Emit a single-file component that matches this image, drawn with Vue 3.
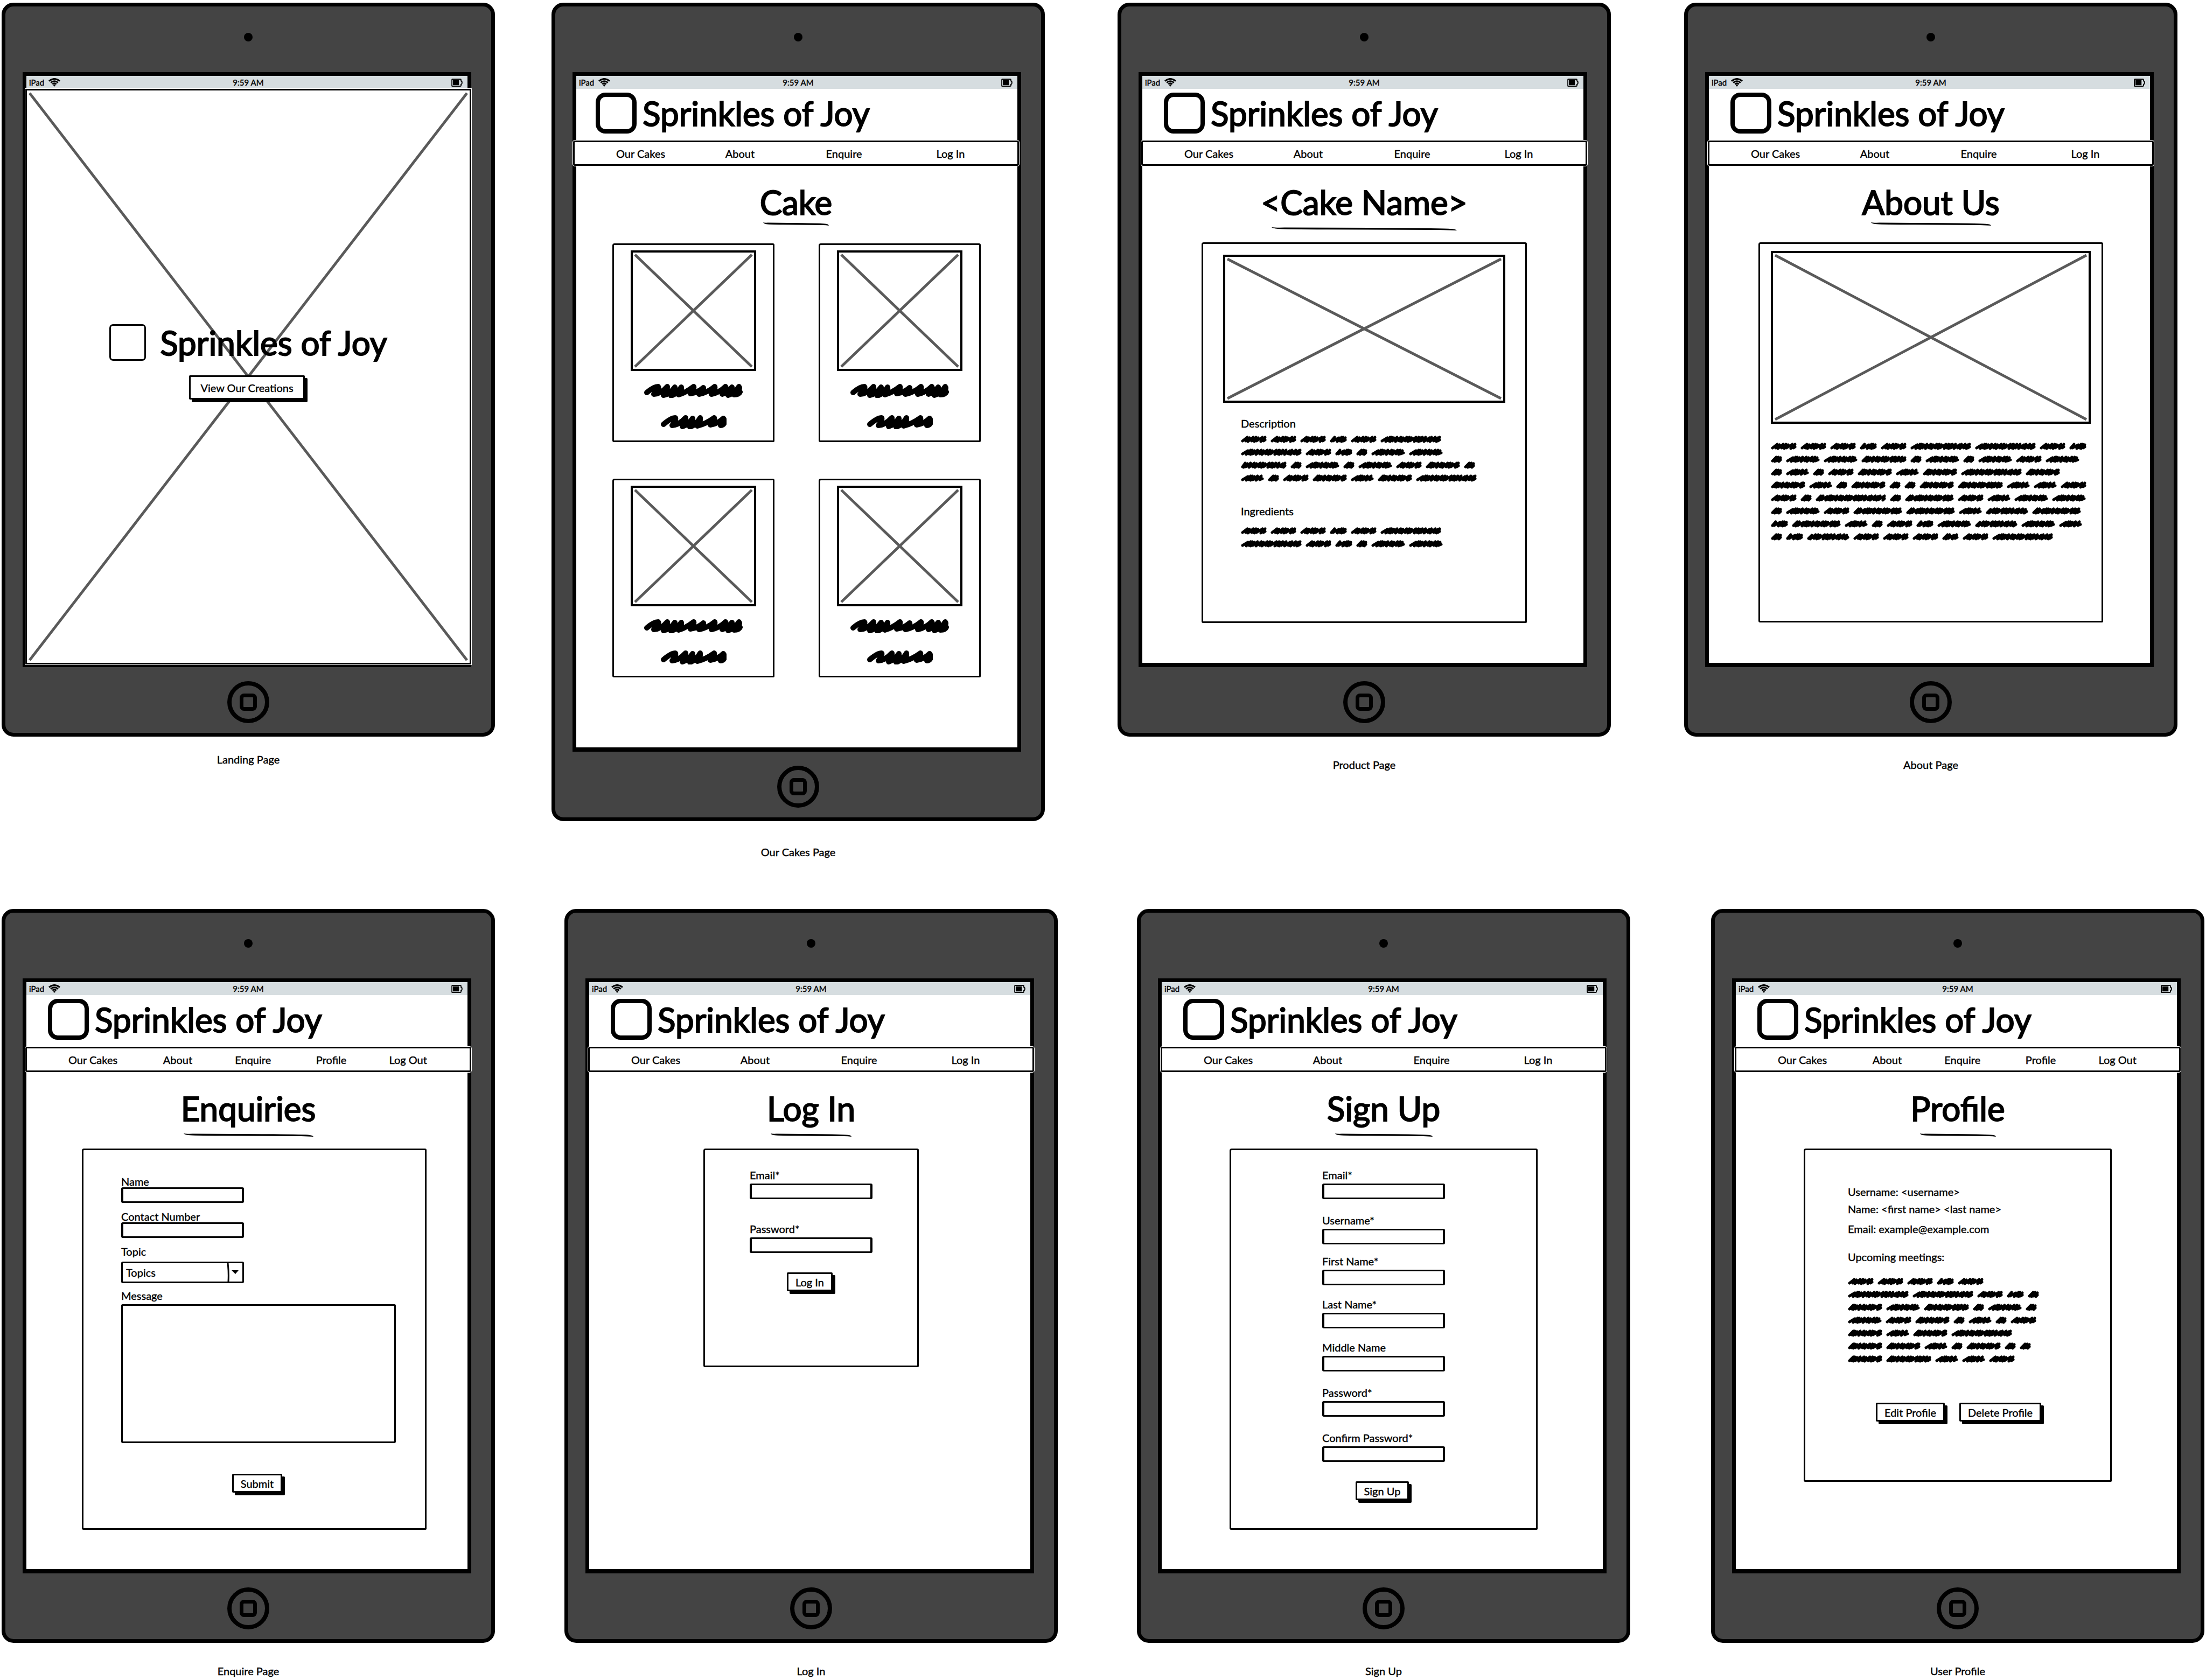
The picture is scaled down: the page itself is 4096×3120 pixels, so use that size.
<script setup>
const guestNav = ['Our Cakes', 'About', 'Enquire', 'Log In']
const memberNav = ['Our Cakes', 'About', 'Enquire', 'Profile', 'Log Out']

const rows = [
  {
    id: 'top',
    screens: [
      { id: 'landing', caption: 'Landing Page' },
      { id: 'cakes', caption: 'Our Cakes Page', title: 'Cake', nav: guestNav, rule: 122 },
      { id: 'product', caption: 'Product Page', title: '<Cake Name>', nav: guestNav, rule: 344 },
      { id: 'about', caption: 'About Page', title: 'About Us', nav: guestNav, rule: 223 },
    ],
  },
  {
    id: 'bottom',
    screens: [
      { id: 'enquire', caption: 'Enquire Page', title: 'Enquiries', nav: memberNav, rule: 241 },
      { id: 'login', caption: 'Log In', title: 'Log In', nav: guestNav, rule: 150 },
      { id: 'signup', caption: 'Sign Up', title: 'Sign Up', nav: guestNav, rule: 181 },
      { id: 'profile', caption: 'User Profile', title: 'Profile', nav: memberNav, rule: 141 },
    ],
  },
]

const loginFields = [
  { id: 'login-email', label: 'Email*', type: 'email' },
  { id: 'login-password', label: 'Password*', type: 'password' },
]

const signupFields = [
  { id: 'signup-email', label: 'Email*', type: 'email', space: 'wide' },
  { id: 'signup-username', label: 'Username*', type: 'text', space: 'tight' },
  { id: 'signup-first', label: 'First Name*', type: 'text', space: 'medium' },
  { id: 'signup-last', label: 'Last Name*', type: 'text', space: 'medium' },
  { id: 'signup-middle', label: 'Middle Name', type: 'text', space: 'wide' },
  { id: 'signup-password', label: 'Password*', type: 'password', space: 'wide' },
  { id: 'signup-confirm', label: 'Confirm Password*', type: 'password', space: 'last' },
]

// Placeholder copy: every number is the width of one scribbled word.
const LINE = 24
const GAP = 7
const STEPS = [7, 5, 4, 8, 5, 3, 4, 6, 7, 4]

function wordPath(left, width, middle) {
  const end = left + width - 3
  let x = left + 3
  let i = width % STEPS.length
  let d = `M${x} ${middle + 3}`
  while (x < end - 4) {
    const step = STEPS[i % STEPS.length]
    const peak = Math.min(x + step + 2, end)
    const lift = i % 3 === 0 ? 3 : 4
    d += `L${peak} ${middle - lift}L${peak - 3} ${middle + (i % 2 ? 4 : 3)}`
    x = peak - 2
    i += 1
  }
  return `${d}L${end} ${middle + 1}`
}

function scribble(lines) {
  let d = ''
  let width = 0
  lines.forEach((words, row) => {
    let x = 0
    words.forEach((w) => {
      d += wordPath(x, w, row * LINE + LINE / 2)
      x += w + GAP
    })
    width = Math.max(width, x - GAP)
  })
  return { d, width, height: lines.length * LINE }
}

const description = scribble([
  [48, 48, 48, 32, 48, 113],
  [113, 48, 32, 21, 63, 63],
  [85, 21, 63, 21, 63, 48, 64, 21],
  [43, 21, 48, 64, 43, 64, 113],
])
const ingredients = scribble([
  [48, 48, 48, 32, 48, 113],
  [113, 48, 32, 21, 63, 63],
])
const story = scribble([
  [48, 48, 48, 32, 48, 113, 113, 48, 32],
  [21, 63, 63, 84, 21, 63, 21, 63, 48, 63],
  [21, 43, 21, 48, 64, 43, 64, 113, 64],
  [64, 43, 21, 64, 21, 21, 64, 84, 43, 43, 48],
  [48, 21, 131, 21, 91, 48, 43, 63, 63],
  [21, 63, 48, 91, 91, 43, 79, 91],
  [32, 91, 43, 21, 48, 32, 63, 79, 63, 43],
  [21, 32, 79, 48, 48, 48, 31, 48, 113],
])
const meetings = scribble([
  [48, 48, 48, 32, 48],
  [113, 113, 48, 32, 21],
  [64, 63, 84, 21, 63, 21],
  [63, 48, 64, 21, 43, 21, 48],
  [64, 43, 64, 113],
  [64, 64, 43, 21, 64, 21, 21],
  [64, 84, 43, 43, 48],
])
</script>

<template>
  <main class="board">
    <section v-for="row in rows" :key="row.id" class="row" :class="row.id">
      <figure v-for="s in row.screens" :key="s.id" class="artboard" :class="s.id">
        <div class="tablet">
          <div class="camera"></div>
          <div class="screen">
            <div class="status">
              <span class="carrier">
                iPad
                <svg class="wifi" viewBox="0 0 22 16" aria-hidden="true">
                  <path d="M1 5.500Q11 -2.500 21 5.500" />
                  <path d="M4.200 8.600Q11 3 17.800 8.600" />
                  <path d="M7.300 11.400Q11 8.400 14.700 11.400" />
                  <circle cx="11" cy="13.800" r="1.800" />
                </svg>
              </span>
              <span class="clock">9:59 AM</span>
              <svg class="battery" viewBox="0 0 22 16" aria-hidden="true">
                <path class="shell" d="M2 1H17.500Q19 1 19 2.500V4.500Q21 5 21 8T19 11.500V13.500Q19 15 17.500 15H2Q1 15 1 14V2Q1 1 2 1Z" />
                <rect x="3" y="3" width="12" height="10" />
              </svg>
            </div>

            <div v-if="s.id === 'landing'" class="page hero">
              <svg class="cross" aria-hidden="true">
                <line x1="0" y1="0" x2="100%" y2="100%" />
                <line x1="100%" y1="0" x2="0" y2="100%" />
              </svg>
              <div class="hero-content">
                <div class="hero-brand">
                  <div class="hero-logo"></div>
                  <h1 class="wordmark">Sprinkles of Joy</h1>
                </div>
                <button type="button" class="button large">View Our Creations</button>
              </div>
            </div>

            <div v-else class="page">
              <header class="brand">
                <div class="logo"></div>
                <div class="wordmark">Sprinkles of Joy</div>
              </header>
              <nav class="nav" :class="{ member: s.nav.length === 5 }">
                <a v-for="item in s.nav" :key="item" href="#">{{ item }}</a>
              </nav>
              <h1 class="title">{{ s.title }}</h1>
              <svg class="rule" viewBox="0 0 200 6" preserveAspectRatio="none" :style="{ width: s.rule + 'px' }" aria-hidden="true">
                <path d="M0 0Q4 1 14 0.600L120 1.200Q186 1.600 194 3Q199 3.600 200 6Q192 5.200 180 5L60 4.200Q14 4 7 3Q1 2 0 0Z" />
              </svg>

              <div v-if="s.id === 'cakes'" class="cards">
                <article v-for="n in 4" :key="n" class="card">
                  <div class="picture">
                    <svg class="cross" aria-hidden="true">
                      <line x1="0" y1="0" x2="100%" y2="100%" />
                      <line x1="100%" y1="0" x2="0" y2="100%" />
                    </svg>
                  </div>
                  <svg class="mark long" viewBox="0 0 183 26" aria-hidden="true">
                    <path d="M5 16Q18 5 26 5Q29 8 18 19Q32 18 43 5Q44 12 36 21Q48 19 57 6Q58 14 50 22Q62 18 69 6Q70 14 64 20Q78 16 92 5Q94 8 86 18Q100 16 110 7Q112 10 102 19Q118 16 131 5Q133 9 125 19Q140 16 151 5Q154 8 145 19Q156 16 163 6Q165 12 156 21Q168 18 176 5Q180 10 167 20Q176 20 178 15" />
                  </svg>
                  <svg class="mark short" viewBox="0 0 122 26" aria-hidden="true">
                    <path d="M5 17Q19 5 27 5Q29 9 21 19Q34 18 46 5Q47 12 40 21Q51 18 59 6Q60 14 54 22Q66 18 73 5Q74 13 68 20Q84 16 99 5Q101 9 92 18Q106 16 116 6Q120 10 111 19Q116 19 118 14" />
                  </svg>
                </article>
              </div>

              <article v-else-if="s.id === 'product'" class="panel">
                <div class="picture">
                  <svg class="cross" aria-hidden="true">
                    <line x1="0" y1="0" x2="100%" y2="100%" />
                    <line x1="100%" y1="0" x2="0" y2="100%" />
                  </svg>
                </div>
                <div class="details">
                  <h2 class="text">Description</h2>
                  <svg class="copy" :width="description.width" :height="description.height" aria-hidden="true"><path :d="description.d" /></svg>
                  <h2 class="text second">Ingredients</h2>
                  <svg class="copy spaced" :width="ingredients.width" :height="ingredients.height" aria-hidden="true"><path :d="ingredients.d" /></svg>
                </div>
              </article>

              <article v-else-if="s.id === 'about'" class="panel">
                <div class="picture">
                  <svg class="cross" aria-hidden="true">
                    <line x1="0" y1="0" x2="100%" y2="100%" />
                    <line x1="100%" y1="0" x2="0" y2="100%" />
                  </svg>
                </div>
                <svg class="copy" :width="story.width" :height="story.height" aria-hidden="true"><path :d="story.d" /></svg>
              </article>

              <form v-else-if="s.id === 'enquire'" class="panel" @submit.prevent>
                <label for="enquire-name">Name</label>
                <input id="enquire-name" type="text" />
                <label for="enquire-phone">Contact Number</label>
                <input id="enquire-phone" type="tel" />
                <label for="enquire-topic">Topic</label>
                <div class="dropdown">
                  <select id="enquire-topic">
                    <option>Topics</option>
                  </select>
                  <svg class="arrow" viewBox="0 0 28 34" aria-hidden="true">
                    <path class="divider" d="M1 0Q3 17 2 34" />
                    <path d="M8 13H21L15 20Z" />
                  </svg>
                </div>
                <label for="enquire-message">Message</label>
                <textarea id="enquire-message"></textarea>
                <button type="submit" class="button">Submit</button>
              </form>

              <form v-else-if="s.id === 'login'" class="panel credentials" @submit.prevent>
                <div v-for="f in loginFields" :key="f.id" class="field">
                  <label :for="f.id">{{ f.label }}</label>
                  <input :id="f.id" :type="f.type" />
                </div>
                <button type="submit" class="button">Log In</button>
              </form>

              <form v-else-if="s.id === 'signup'" class="panel credentials" @submit.prevent>
                <div v-for="f in signupFields" :key="f.id" class="field" :class="f.space">
                  <label :for="f.id">{{ f.label }}</label>
                  <input :id="f.id" :type="f.type" />
                </div>
                <button type="submit" class="button">Sign Up</button>
              </form>

              <article v-else class="panel">
                <p class="text">Username: &lt;username&gt;</p>
                <p class="text name">Name: &lt;first name&gt; &lt;last name&gt;</p>
                <p class="text email">Email: example@example.com</p>
                <h2 class="text upcoming">Upcoming meetings:</h2>
                <svg class="copy" :width="meetings.width" :height="meetings.height" aria-hidden="true"><path :d="meetings.d" /></svg>
                <div class="actions">
                  <button type="button" class="button">Edit Profile</button>
                  <button type="button" class="button">Delete Profile</button>
                </div>
              </article>
            </div>
          </div>
          <div class="home"></div>
        </div>
        <figcaption>{{ s.caption }}</figcaption>
      </figure>
    </section>
  </main>
</template>

<style>
body {
  margin: 0;
  background: #fff;
}
</style>

<style scoped>
.board,
.board *,
.board *::before {
  box-sizing: border-box;
}

.board {
  display: flex;
  flex-direction: column;
  gap: 94px;
  padding-top: 5px;
  color: #000;
  font-family: Lato, "Open Sans", sans-serif;
  font-size: 20px;
  line-height: 24px;
  -webkit-text-stroke: 0.4px #000;
}

.row {
  display: grid;
  align-items: start;
}

.row.top {
  grid-template-columns: 3fr 916fr 105fr 916fr 135fr 916fr 136fr 916fr 53fr;
}

.row.bottom {
  grid-template-columns: 3fr 916fr 129fr 916fr 147fr 916fr 150fr 916fr 3fr;
}

.artboard {
  margin: 0;
  min-width: 0;
}

.artboard:nth-child(1) { grid-column: 2; }
.artboard:nth-child(2) { grid-column: 4; }
.artboard:nth-child(3) { grid-column: 6; }
.artboard:nth-child(4) { grid-column: 8; }

figcaption {
  margin-top: 40px;
  text-align: center;
}

.landing figcaption { margin-top: 30px; }
.cakes figcaption { margin-top: 45px; }

/* Tablet frame */
.tablet {
  display: flex;
  flex-direction: column;
  align-items: center;
  padding-bottom: 18px;
  border: 7px solid #000;
  border-radius: 22px;
  background: #444;
}

.camera {
  width: 16px;
  height: 16px;
  margin: 49px 0 57px;
  border-radius: 50%;
  background: #000;
}

.screen {
  align-self: stretch;
  min-height: 1105px;
  margin: 0 37px 0 32px;
  border: 7px solid #000;
  border-bottom-width: 8px;
  background: #fff;
}

.home {
  display: grid;
  place-items: center;
  width: 78px;
  height: 78px;
  margin-top: 26px;
  border: 8px solid #000;
  border-radius: 50%;
}

.home::before {
  content: "";
  width: 32px;
  height: 32px;
  border: 7px solid #000;
  border-radius: 8px;
}

.status {
  display: grid;
  grid-template-columns: 1fr auto 1fr;
  align-items: center;
  height: 24px;
  padding-left: 5px;
  background: #d6dde0;
  font-size: 15px;
}

.carrier {
  display: flex;
  align-items: center;
  gap: 8px;
}

.wifi {
  width: 22px;
  height: 16px;
  fill: none;
  stroke: #000;
  stroke-width: 3;
}

.wifi circle {
  fill: #000;
  stroke: none;
}

.battery {
  justify-self: end;
  width: 21px;
  height: 15px;
  margin-right: 9px;
}

.battery .shell {
  fill: none;
  stroke: #000;
  stroke-width: 2;
}

/* Page inside the tablet: the menu bar overlaps the frame on both sides */
.page {
  position: relative;
  display: flex;
  flex-direction: column;
  margin: 0 -7px 0 -2px;
}

.cakes .page { margin: 0 -3px 0 -6px; }

.brand {
  display: flex;
  align-items: center;
  gap: 11px;
  padding: 7px 42px 13px;
}

.logo {
  width: 76px;
  height: 76px;
  border: 8px solid #000;
  border-radius: 18px;
}

.wordmark,
.title {
  margin: 0;
  font-size: 62px;
  font-weight: 400;
  line-height: 72px;
  -webkit-text-stroke: 2px #000;
}

.nav {
  display: grid;
  grid-template-columns: 202fr 186fr 204fr 150fr;
  align-items: center;
  height: 47px;
  padding-left: 77px;
  border: 3px solid #000;
  border-radius: 3px;
  outline: 1px solid #fff;
  background: #fff;
}

.nav.member {
  grid-template-columns: 175fr 133fr 150fr 135fr 149fr;
}

.nav a {
  color: #000;
  text-decoration: none;
}

.title {
  margin-top: 31px;
  text-align: center;
}

.rule {
  align-self: center;
  height: 6px;
  margin: 11px 0 22px;
}

.cakes .rule { margin: 2px 0 33px; }
.about .rule { margin: 2px 0 31px; }

.text {
  margin: 0;
  font-size: 20px;
  font-weight: 400;
  line-height: 24px;
}

.panel,
.card {
  border: 3px solid #000;
  border-radius: 4px 3px 2px 3px;
  background: #fff;
}

.panel {
  display: flex;
  flex-direction: column;
  align-items: flex-start;
}

.picture {
  align-self: stretch;
  padding: 4px;
  border: 4px solid #000;
  background: #fff;
}

.cross {
  display: block;
  width: 100%;
  height: 100%;
  overflow: visible;
}

.cross line {
  stroke: #5a5a5a;
  stroke-width: 5;
}

.copy {
  display: block;
  max-width: 100%;
}

.copy path,
.mark path {
  fill: none;
  stroke: #000;
  stroke-width: 5;
  stroke-linecap: round;
  stroke-linejoin: round;
}

/* Landing */
.hero {
  height: 1069px;
  margin-bottom: -3px;
  padding: 5px;
  border: 3px solid #000;
  outline: 1px solid #fff;
  background: #fff;
}

.hero-content {
  position: absolute;
  inset: 432px 0 auto;
  display: flex;
  flex-direction: column;
  align-items: center;
  gap: 25px;
}

.hero-brand {
  display: flex;
  align-items: center;
  gap: 26px;
}

.hero-logo {
  width: 68px;
  height: 68px;
  border: 3px solid #000;
  border-radius: 7px;
  background: #fff;
}

/* Our cakes */
.cards {
  display: grid;
  grid-template-columns: 1fr 1fr;
  gap: 68px 82px;
  padding: 0 71px 130px 73px;
}

.card {
  display: flex;
  flex-direction: column;
  align-items: center;
  padding: 10px 31px 21px;
}

.card .picture {
  height: 224px;
}

.mark {
  height: 26px;
}

.mark.long {
  width: 183px;
  margin-top: 24px;
}

.mark.short {
  width: 122px;
  margin-top: 32px;
}

.mark path {
  stroke-width: 10;
}

/* Product */
.product .panel {
  margin: 0 112px 73px;
  padding: 20px 37px 132px;
}

.product .picture {
  height: 275px;
}

.details {
  padding: 26px 0 0 33px;
}

.details .copy { margin-top: 6px; }
.details .copy.spaced { margin-top: 13px; }
.details .second { margin-top: 37px; }

/* About */
.about .panel {
  margin: 0 94px 73px;
  padding: 13px 20px 144px;
}

.about .picture {
  height: 321px;
  margin-bottom: 30px;
}

/* Forms */
label {
  display: block;
  line-height: 18px;
}

input,
select,
textarea {
  display: block;
  margin: 0;
  border: 3px solid #000;
  border-radius: 3px;
  outline: none;
  background: #fff;
  color: #000;
  font: inherit;
  -webkit-text-stroke: inherit;
}

input {
  width: 228px;
  height: 29px;
  padding: 0 8px;
  border-width: 3px 4px;
}

.button {
  height: 35px;
  margin: 0 5px 5px 0;
  padding: 0 13px;
  border: 3px solid #000;
  border-radius: 2px;
  background: #fff;
  box-shadow: 5px 5px 0 #000;
  color: #000;
  font: inherit;
  line-height: 24px;
  -webkit-text-stroke: inherit;
}

.button.large {
  height: 45px;
  padding: 0 18px;
}

.enquire .panel {
  margin: 0 83px 73px 105px;
  padding: 49px 54px 61px 70px;
}

.enquire input { margin: 2px 0 16px; }

.dropdown {
  position: relative;
  width: 228px;
  margin: 10px 0 14px;
}

select {
  width: 100%;
  height: 40px;
  padding: 0 34px 0 6px;
  appearance: none;
}

.arrow {
  position: absolute;
  top: 3px;
  right: 3px;
  width: 28px;
  height: 34px;
  pointer-events: none;
}

.arrow .divider {
  fill: none;
  stroke: #000;
  stroke-width: 3;
}

textarea {
  align-self: stretch;
  height: 258px;
  margin: 7px 0 57px;
  padding: 8px;
  resize: none;
}

.enquire .button { align-self: center; }

.credentials { align-items: center; }

.field input { margin-top: 7px; }

.login .panel {
  margin: 0 214px;
  padding: 37px 0 133px;
}

.login .field { margin-bottom: 46px; }
.login .field:nth-of-type(2) { margin-bottom: 36px; }

.signup .panel {
  margin: 0 128px 73px;
  padding: 37px 0 47px;
}

.field.wide { margin-bottom: 30px; }
.field.medium { margin-bottom: 26px; }
.field.tight { margin-bottom: 22px; }
.field.last { margin-bottom: 36px; }

/* Profile */
.profile .panel {
  margin: 0 128px;
  padding: 65px 79px 104px;
}

.profile .name { margin-top: 8px; }
.profile .email { margin-top: 13px; }
.profile .upcoming { margin-top: 28px; }
.profile .copy { margin-top: 22px; }

.actions {
  display: flex;
  gap: 22px;
  margin: 69px 0 0 52px;
}
</style>
